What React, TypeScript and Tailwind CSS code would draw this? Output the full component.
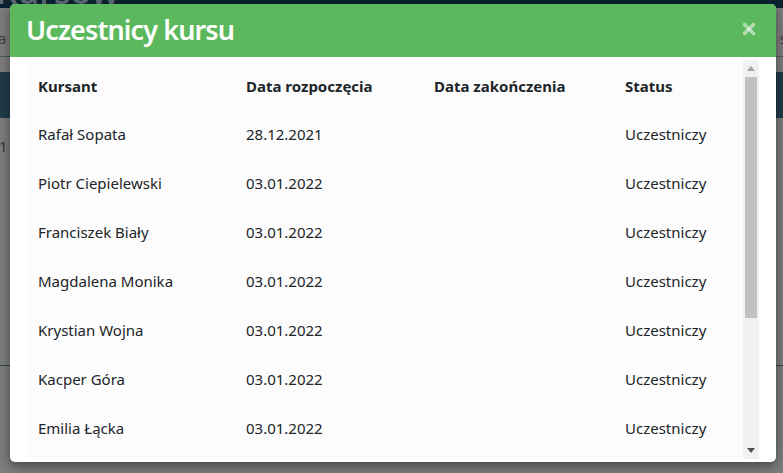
import { X } from 'lucide-react';

const participants = [
  { name: 'Rafał Sopata', start: '28.12.2021' },
  { name: 'Piotr Ciepielewski', start: '03.01.2022' },
  { name: 'Franciszek Biały', start: '03.01.2022' },
  { name: 'Magdalena Monika', start: '03.01.2022' },
  { name: 'Krystian Wojna', start: '03.01.2022' },
  { name: 'Kacper Góra', start: '03.01.2022' },
  { name: 'Emilia Łącka', start: '03.01.2022' },
];

const cols = 'grid grid-cols-[208px_188px_191px_1fr]';

export default function App() {
  return (
    <div className="relative w-[783px] h-[473px] overflow-hidden bg-[#7d7d7d] font-['Open_Sans',sans-serif]">
      {/* dimmed page behind the modal */}
      <div className="flex flex-col h-full">
        <div className="h-[8px] bg-[#0b2331] overflow-hidden">
          <span className="block -mt-[26px] ml-[-4px] text-[34px] leading-[34px] font-semibold text-[#5c6b76]">Kursów</span>
        </div>
        <div className="h-[48px] flex justify-between items-center text-[15px] text-[#3a3a3a]">
          <span className="-ml-[2px] mt-[12px]">a</span>
          <span className="-mr-[4px] mt-[12px]">s</span>
        </div>
        <div className="h-px bg-[#4a5a63]" />
        <div className="h-[15px]" />
        <div className="h-[46px] bg-[#1f3c49]" />
        <div className="h-[27px] flex items-center text-[15px] text-[#333]">
          <span className="ml-[-1px] mt-[30px]">1</span>
        </div>
        <div className="h-[220px]" />
        <div className="h-px bg-[#2c4450]" />
        <div className="flex-1" />
      </div>

      {/* modal */}
      <div className="absolute left-[10px] top-[4px] w-[766px] h-[458px] rounded-[5px] bg-white shadow-[0_4px_12px_rgba(0,0,0,0.45)] overflow-hidden flex flex-col">
        <div className="h-[53px] shrink-0 bg-[#5cb85c] flex items-center justify-between pl-[16px] pr-[18px]">
          <h2 className="text-[27px] leading-none font-semibold text-white tracking-[-0.9px] font-['Noto_Sans',sans-serif] -mt-[2px]">
            Uczestnicy kursu
          </h2>
          <X className="w-[18px] h-[18px] text-white/50 -mt-[4px]" strokeWidth={5} />
        </div>

        <div className="flex-1 flex pl-[17px] pr-[17px] pt-[3px] pb-[3px] min-h-0">
          <div className="flex-1 bg-[#fcfcfc] overflow-hidden pt-[2px] text-[15px] text-[#212529] font-['Noto_Sans',sans-serif]">
            <div className={`${cols} h-[48px] items-center font-bold`}>
              <div className="pl-[11px]">Kursant</div>
              <div className="pl-[11px]">Data rozpoczęcia</div>
              <div className="pl-[11px]">Data zakończenia</div>
              <div className="pl-[11px]">Status</div>
            </div>
            {participants.map((p) => (
              <div key={p.name} className={`${cols} h-[49px] items-center`}>
                <div className="pl-[11px]">{p.name}</div>
                <div className="pl-[11px]">{p.start}</div>
                <div className="pl-[11px]"></div>
                <div className="pl-[11px]">Uczestniczy</div>
              </div>
            ))}
          </div>

          {/* scrollbar */}
          <div className="w-[16px] bg-[#f1f1f1] flex flex-col items-center">
            <div className="h-[17px] flex items-center justify-center">
              <svg width="8" height="5" viewBox="0 0 8 5"><path d="M0 5 L4 0 L8 5 Z" fill="#a3a3a3" /></svg>
            </div>
            <div className="w-[12px] h-[241px] bg-[#c1c1c1]" />
            <div className="flex-1" />
            <div className="h-[17px] flex items-center justify-center">
              <svg width="8" height="5" viewBox="0 0 8 5"><path d="M0 0 L8 0 L4 5 Z" fill="#505050" /></svg>
            </div>
          </div>
        </div>
      </div>
    </div>
  );
}
